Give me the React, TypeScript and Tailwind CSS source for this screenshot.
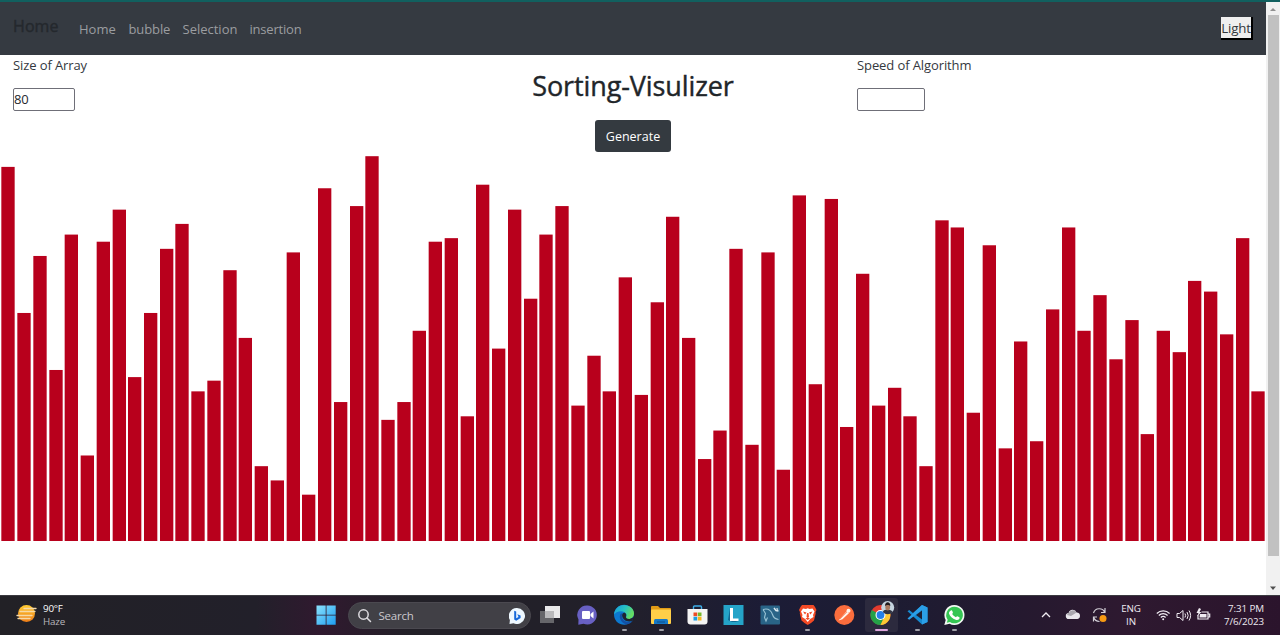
import type { ReactNode } from "react";

const values = [
  105, 64, 80, 48, 86, 24, 84, 93, 46, 64, 82, 89, 42, 45, 76, 57, 21, 17, 81, 13, 99, 39, 94, 108, 34, 39, 59,
  84, 85, 35, 100, 54, 93, 68, 86, 94, 38, 52, 42, 74, 41, 67, 91, 57, 23, 31, 82, 27, 81, 20, 97, 44, 96, 32,
  75, 38, 43, 35, 21, 90, 88, 36, 83, 26, 56, 28, 65, 88, 59, 69, 51, 62, 30, 59, 53, 73, 70, 58, 85, 42,
];

const PITCH = 15.823;
const UNIT = 3.563;
const CHART_H = 386;

const snap = (n: number) => Math.round(n * 1.5) / 1.5;

function Bars() {
  return (
    <svg className="block h-[386px] w-[1266px]" viewBox={`0 0 1266 ${CHART_H}`}>
      {values.map((v, i) => (
        <rect
          key={i}
          x={snap(1.6 + PITCH * i)}
          y={CHART_H - v * UNIT}
          width={13.33}
          height={v * UNIT}
          fill="#b8001c"
        />
      ))}
    </svg>
  );
}

function NavBar() {
  return (
    <nav className="flex h-[53px] shrink-0 items-start bg-[#353a41] pl-[13px] pr-[13px]">
      <span className="mt-[12px] w-[66px] text-[16px] font-medium leading-[24px] tracking-[0.1px] text-[#24282d] [-webkit-text-stroke:0.4px_#24282d]">
        Home
      </span>
      <div className="mt-[17px] flex text-[13px] leading-[20px] text-[#9b9da0]">
        <span className="w-[49.500px]">Home</span>
        <span className="w-[54px] tracking-[-0.1px]">bubble</span>
        <span className="w-[67px]">Selection</span>
        <span className="tracking-[-0.2px]">insertion</span>
      </div>
      <button className="ml-auto mt-[15px] flex h-[23px] w-[32px] items-center justify-center border-b-2 border-r-2 border-black bg-[#efefef] pt-px text-[13.300px] leading-[20px] tracking-[-0.2px] text-[#33373c]">
        Light
      </button>
    </nav>
  );
}

function Controls() {
  return (
    <section className="flex h-[100px] shrink-0 text-[#34383e]">
      <div className="w-[422px] pl-[13px]">
        <p className="text-[13px] leading-[20px] tracking-[-0.1px]">Size of Array</p>
        <div className="mt-[13px] flex h-[23px] w-[62px] items-center rounded-[2px] border border-[#6f6f78] pt-px text-[13px] tracking-[-0.2px] text-[#26292e]">
          80
        </div>
      </div>
      <div className="flex w-[422px] flex-col items-center">
        <h1 className="mt-[15px] whitespace-nowrap text-[27px] font-medium leading-[32px] tracking-[-0.1px] text-[#212529] [-webkit-text-stroke:0.4px_#212529]">
          Sorting-Visulizer
        </h1>
        <button className="mt-[18px] h-[32px] w-[76px] shrink-0 rounded-[3px] bg-[#343a40] pt-[2px] text-[12.500px] text-white">
          Generate
        </button>
      </div>
      <div className="w-[422px] pl-[13px]">
        <p className="text-[13px] leading-[20px] tracking-[-0.1px]">Speed of Algorithm</p>
        <div className="mt-[13px] h-[23px] w-[68px] rounded-[2px] border border-[#6f6f78]" />
      </div>
    </section>
  );
}

function ScrollBar() {
  return (
    <aside className="flex w-[14px] flex-col items-center bg-[#f1f1f1]">
      <svg className="h-[13px] w-[14px]" viewBox="0 0 14 13">
        <path d="M4 9 7 6l3 3z" fill="#909090" />
      </svg>
      <div className="ml-px h-[541px] w-[11px] bg-[#c1c1c1]" />
      <svg className="mt-auto h-[16px] w-[14px]" viewBox="0 0 14 16">
        <path d="M4 7.500h6L7 11z" fill="#505050" />
      </svg>
    </aside>
  );
}

function AppIcon({ children, mark }: { children: ReactNode; mark?: "open" | "active" }) {
  return (
    <div className="flex w-[36.700px] shrink-0 justify-center">
      <div
        className={
          mark === "active"
            ? "flex h-[34px] w-[33px] flex-col items-center rounded-[3px] bg-[#2c2a3e]"
            : "flex h-[34px] w-[33px] flex-col items-center"
        }
      >
        <svg className="mt-[7px] h-[20px] w-[22px] shrink-0 overflow-visible" viewBox="0 0 22 20">
          {children}
        </svg>
        {mark === "open" && <i className="mt-[4px] h-[2px] w-[5px] shrink-0 rounded-full bg-[#a0a0a8]" />}
        {mark === "active" && <i className="mt-[4px] h-[2px] w-[13px] shrink-0 rounded-full bg-[#dda5dd]" />}
      </div>
    </div>
  );
}

function TaskBar() {
  return (
    <footer className="flex h-[40px] shrink-0 items-start border-t border-[#3b3a40] bg-[linear-gradient(90deg,#222126_0%,#22202a_20%,#30192f_25%,#222027_32%,#22202a_48%,#1c1c36_60%,#1d1c32_70%,#25192f_80%,#2e1930_88%,#2b142c_100%)] pt-[2px] text-[#eeeaf0]">
      <div className="flex w-[308px] pl-[16px] pt-[4px]">
        <svg className="mt-[2px] h-[22px] w-[22px]" viewBox="0 0 22 22">
          <defs>
            <linearGradient id="sun" x1="0" y1="0" x2="0" y2="1">
              <stop stopColor="#ffcb30" />
              <stop offset="1" stopColor="#ed7d18" />
            </linearGradient>
          </defs>
          <circle cx="10.500" cy="9.500" r="8.500" fill="url(#sun)" />
          <path d="M8 4.500h12M4 7.500h15M1 11.500h15M2 14.500h12" stroke="#f6d9a6" strokeWidth="1.300" strokeLinecap="round" />
        </svg>
        <div className="ml-[5px] text-[9.800px] leading-[13px] tracking-[-0.200px]">
          <div className="text-white">90°F</div>
          <div className="text-[#b8b6bc]">Haze</div>
        </div>
      </div>

      <AppIcon>
        <defs>
          <linearGradient id="win" x1="0" y1="0" x2="1" y2="1">
            <stop stopColor="#8be3fd" />
            <stop offset="1" stopColor="#1d9cf0" />
          </linearGradient>
        </defs>
        <path d="M1.500 .5h9.200v9.200H1.500zM11.500 .5h9.200v9.200h-9.200zM1.500 10.500h9.200v9.200H1.500zM11.500 10.500h9.200v9.200h-9.200z" fill="url(#win)" />
      </AppIcon>

      <div className="ml-[3.300px] mr-[1.700px] mt-[4px] flex h-[27px] w-[183px] shrink-0 items-center rounded-full border border-[#4b4950] bg-[#414046] pl-[9px] pr-[5px]">
        <svg className="h-[14px] w-[14px]" viewBox="0 0 14 14" fill="none" stroke="#dcdadf" strokeWidth="1.500" strokeLinecap="round">
          <circle cx="5.500" cy="5.500" r="4.700" />
          <path d="m9 9 3.500 3.500" />
        </svg>
        <span className="ml-[6.500px] text-[11.500px] tracking-[-0.200px] text-[#cac8ce]">Search</span>
        <svg className="ml-auto h-[16px] w-[16px]" viewBox="0 0 16 16">
          <path d="M8 0a8 8 0 1 1-3.500 15.200L.5 16l.4-4A8 8 0 0 1 8 0z" fill="#eef8ff" />
          <path d="m5.200 2.800 2 .8v6.600l2.300-1.300-1.200-2.600 3.300 1.300v2.500L7.200 12.800l-2-1.200z" fill="#1769da" />
        </svg>
      </div>

      <AppIcon>
        <rect x="0" y="6" width="14" height="12" fill="#66666a" />
        <rect x="5" y="1" width="15" height="12" fill="#e9e9ea" />
        <rect x="5" y="6" width="9" height="7" fill="#b9b9bb" />
      </AppIcon>
      <AppIcon>
        <path d="M10.500 .5a9.500 9.500 0 1 1-4 18.200l-5.200 1 .2-5.200A9.500 9.500 0 0 1 10.500 .5z" fill="#6860c3" />
        <rect x="5" y="6" width="8" height="8" rx="1" fill="#fff" />
        <path d="m13.500 9 3-2.500v7l-3-2.500z" fill="#fff" />
      </AppIcon>
      <AppIcon mark="open">
        <defs>
          <linearGradient id="edge" x1="0" y1="0" x2="1" y2="0.4">
            <stop stopColor="#169bdd" />
            <stop offset=".55" stopColor="#27c2c4" />
            <stop offset="1" stopColor="#65dc62" />
          </linearGradient>
        </defs>
        <path d="M19.600 15A10 10 0 1 1 21 9z" fill="#0c78cf" />
        <path d="M1 9.500C1.500 4 5.500 0 11 0c6 0 10 4 10 8.500 0 3.500-2.500 5.500-5.500 5.500-2 0-3-.8-2.500-1.800.6-1 .6-2 .2-3-.8-1.800-2.800-3-5.200-3C4.800 6.200 2 8 1 9.500z" fill="url(#edge)" />
        <path d="M8 8.500c-2.500 2.500-1 8.300 4 10.400 3 .8 6-.5 7.600-3-4 2-9.600 1-10.600-3.900-.3-1.500 0-2.600.8-3.500z" fill="#1450a4" />
        <path d="M9.800 8.500c1-1.200 3-.7 3.400 1 .2 1.200-.4 2-.2 2.700.3 1 1.400 1.800 3.500 1.700 1.800-.1 3.300-1 4.100-2.300-.1 1.700-.5 3-1.300 4.200-3.800 2-9.500-.4-10.100-4.500-.1-1.200 0-2.100.6-2.800z" fill="#1f2430" />
      </AppIcon>
      <AppIcon mark="open">
        <path d="M1 2q0-1 1-1h6l2 2h10q1 0 1 1v4H1z" fill="#e19b16" />
        <rect x="1" y="4.500" width="20" height="14.500" rx="1" fill="#ffcf48" />
        <path d="M4 19v-3.500Q4 14 5.500 14h11q1.500 0 1.500 1.500V19z" fill="#1578c7" />
        <path d="M7 17h8" stroke="#0c4e8a" />
      </AppIcon>
      <AppIcon>
        <path d="M6.500 5V2q0-1 1-1h6q1 0 1 1v3" fill="none" stroke="#3faee8" strokeWidth="1.400" />
        <path d="M.5 4h20v12.500q0 3-3 3h-14q-3 0-3-3z" fill="#f4f4f4" />
        <path d="M6.500 7.500h3.700v3.700H6.500z" fill="#ee4b26" />
        <path d="M10.800 7.500h3.700v3.700h-3.700z" fill="#77b82a" />
        <path d="M6.500 11.800h3.700v3.700H6.500z" fill="#1b9fe4" />
        <path d="M10.800 11.800h3.700v3.700h-3.700z" fill="#f7b51d" />
      </AppIcon>
      <AppIcon>
        <rect x=".5" y="0" width="20" height="20" fill="#25a4c8" />
        <path d="m7 3-2 12 4 2h7l-7-2z" fill="#126a94" />
        <path d="M7 3h3v10.500h5.500V16H7z" fill="#fff" />
      </AppIcon>
      <AppIcon>
        <rect x=".5" y=".5" width="19.500" height="19" rx="1" fill="#296487" />
        <path d="M3 4.500c5-1.500 8 1 9.500 5 1 3.500 2.500 4.500 6 5M3 4.500l2.500 4-1 4 1.500 3.500 1.500-3.500" fill="none" stroke="#9ac3d5" strokeWidth="1.100" />
        <path d="m14 3 2 2.500 2.500.5M16.500 3.500l1.500 1" fill="none" stroke="#dbe9f0" strokeWidth="1.500" />
      </AppIcon>
      <AppIcon mark="open">
        <path d="M5 0h11.500l1.500 2 1.500 3-1 2 .2 1.500-1.700 7-3 2.500-3.300 2-3.200-2-3-2.500-1.700-7L3 7 2 5l1.500-3z" fill="#f34a25" />
        <path d="m6 3.500 3 .5 1.700-.7 1.800.7 3-.5 2 3-1.500 3.500.5 2-3.300 2-2.500 3-2.500-3-3.200-2 .5-2L4 6.500z" fill="#fff" />
        <path d="m6 6.500 3.500 1L8 9.500zm9.500 0-3.500 1 1.500 2zM10 8h1.500l.5 4-1.300.7L9.500 12zM8.500 13.500l2.200-1 2.200 1-2.200 1.500z" fill="#f34a25" />
      </AppIcon>
      <AppIcon>
        <circle cx="10.300" cy="10" r="10" fill="#fb6d3d" />
        <path d="m4.500 15.500 8.200-9.300 2.200 2-6.400 6z" fill="#fff3ea" />
        <circle cx="14.500" cy="5.700" r="2" fill="#fff3ea" />
        <path d="m6 14 7-7" stroke="#fb6d3d" strokeWidth=".6" />
      </AppIcon>
      <AppIcon mark="active">
        <circle cx="10.500" cy="10" r="10" fill="#e33b2e" />
        <path d="M10.500 10 1.800 5a10 10 0 0 0 8.700 15l4.500-7.500z" fill="#24a148" />
        <path d="M10.500 10H15l-4.500 10A10 10 0 0 0 19.200 5.200L10.500 5z" fill="#fcc934" />
        <circle cx="10.500" cy="10" r="5" fill="#fff" />
        <circle cx="10.500" cy="10" r="3.900" fill="#2480e8" />
        <circle cx="17.700" cy="2.500" r="6.500" fill="#c5d4df" />
        <path d="M12.800 6.900c1-2 2.200-2.200 4.900-2.200s4 .7 4.900 2.200a6.500 6.500 0 0 1-9.800 0z" fill="#303443" />
        <ellipse cx="17.700" cy="2.100" rx="2.400" ry="3.500" fill="#a87960" />
        <path d="M15.100 1.100c-.4-5 5.600-5 5.200 0-1-1.500-4-1.500-5.200 0z" fill="#20191c" />
      </AppIcon>
      <AppIcon mark="open">
        <path d="m15 0-9 8-3.800-3L.5 6.200 15 19.500l5.500-2.500V2.500z" fill="#168ad1" />
        <path d="m.5 13.500 1.700 1.300L15 5v14.500l5.500-2.500V2.500L15 0z" fill="#2b9fe7" />
        <path d="M15 5.500 9 10l6 4.500z" fill="#1e2035" />
      </AppIcon>
      <AppIcon mark="open">
        <path d="M10.300 0a10 10 0 1 1-4.700 18.700L.3 20l1.400-5A10 10 0 0 1 10.300 0z" fill="#f2f8f3" />
        <path d="M10.300 1.700A8.300 8.300 0 1 1 6 16.900l-3.200.8.900-3a8.300 8.300 0 0 1 6.600-13z" fill="#35c653" />
        <path d="M6.900 5.500c.7-.5 1.200-.2 1.400.4l.6 1.500c.2.600-.8 1.400-.8 1.400 1 1.800 2.200 2.700 3.800 3.400 0 0 .9-1.300 1.500-1l1.900 1c.5.300.3 1-.1 1.700-.7 1-2 1.300-3.500.9-3.200-1-5.900-3.400-6.700-6.200-.3-1.300.9-2.500 1.900-3.100z" fill="#fff" />
      </AppIcon>

      <div className="ml-auto flex shrink-0 pr-[16px] pt-[4px]">
        <svg className="mt-[5px] h-[16px] w-[82px] overflow-visible" viewBox="0 0 82 16" fill="none">
          <path d="m6 10 4-4 4 4" stroke="#efebf1" strokeWidth="1.300" />
          <path d="M33 12a3 3 0 0 1-.4-6 4.200 4.200 0 0 1 8-.5A3.300 3.300 0 0 1 41.500 12z" fill="#e9e7ec" />
          <path d="M31 8a3 3 0 0 1 2-2.300 4.200 4.200 0 0 1 7.600-.2L35 9z" fill="#aaa8af" />
          <path d="M57.500 6a6 6 0 0 1 11.300-.5M69 1v4.500h-4M57.500 10c1 3 3 4.500 6 4.500M57.500 14.500V10h3.500" stroke="#d4d1d8" strokeWidth="1.200" />
          <circle cx="67" cy="11.500" r="3.500" fill="#f79a13" />
        </svg>
        <div className="ml-[-4px] w-[34px] text-center text-[9.800px] leading-[13px] tracking-[-0.100px]">
          <div>ENG</div>
          <div>IN</div>
        </div>
        <svg className="ml-[8px] mt-[5px] h-[16px] w-[56px]" viewBox="0 0 56 16" fill="none" stroke="#efebf1" strokeWidth="1.200">
          <path d="M.8 6.500a9 9 0 0 1 12.800 0M2.800 8.500a6.200 6.200 0 0 1 8.800 0M4.800 10.500a3.400 3.400 0 0 1 4.800 0" />
          <circle cx="7.200" cy="12.300" r="1" fill="#efebf1" stroke="none" />
          <path d="M21 6.500h2.500L27 3.500v10l-3.500-3H21zM29 6.500q1.200 2 0 4M31 5q2.300 3.500 0 7M33 3.500q3.200 5 0 10" strokeWidth="1" />
          <path d="M45.500 5H52v7H42V8M52 7h1.700v3H52" />
          <path d="M44 7h6.500v3.500h-7z" fill="#efebf1" stroke="none" />
          <path d="m43 1-2.500 5h2L41 9.500 45.500 5h-2L45 2z" fill="#efebf1" stroke="none" />
        </svg>
        <div className="w-[52px] whitespace-nowrap text-right text-[9.800px] leading-[13px] tracking-[-0.100px]">
          <div>7:31 PM</div>
          <div>7/6/2023</div>
        </div>
      </div>
    </footer>
  );
}

export default function App() {
  return (
    <div className="flex h-[635px] w-[1280px] flex-col overflow-hidden bg-white font-['Open_Sans','Noto_Sans',sans-serif]">
      <div className="h-[2px] shrink-0 bg-[#11605f]" />
      <div className="flex h-[593px] shrink-0">
        <main className="flex w-[1266px] flex-col">
          <NavBar />
          <Controls />
          <Bars />
        </main>
        <ScrollBar />
      </div>
      <TaskBar />
    </div>
  );
}
